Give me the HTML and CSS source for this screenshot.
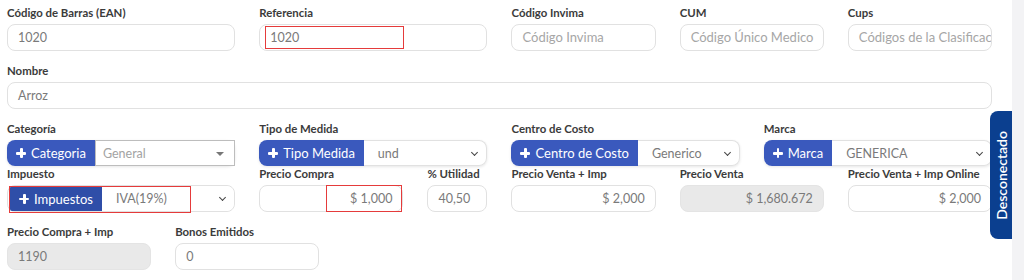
FILE: index.html
```html
<!DOCTYPE html>
<html lang="es">
<head>
<meta charset="utf-8">
<title>Producto</title>
<link rel="stylesheet" href="styles.css">
</head>
<body>
<div class="page">
  <main class="form">
    <div class="grid">
      <div class="field s3">
        <label class="lbl">Código de Barras (EAN)</label>
        <div class="input">1020</div>
      </div>
      <div class="field s3">
        <label class="lbl">Referencia</label>
        <div class="input marked-ref">1020<span class="mark mark-ref"></span></div>
      </div>
      <div class="field s2">
        <label class="lbl">Código Invima</label>
        <div class="input ph">Código Invima</div>
      </div>
      <div class="field s2">
        <label class="lbl">CUM</label>
        <div class="input ph">Código Único Medico</div>
      </div>
      <div class="field s2">
        <label class="lbl">Cups</label>
        <div class="input ph clip">Códigos de la Clasificac</div>
      </div>

      <div class="field s12">
        <label class="lbl">Nombre</label>
        <div class="input">Arroz</div>
      </div>

      <div class="field s3 tight">
        <label class="lbl">Categoría</label>
        <div class="igroup shadow">
          <span class="btn"><span class="plus"></span>Categoria</span>
          <span class="sel sel-box">General<span class="tri"></span></span>
        </div>
      </div>
      <div class="field s3 tight">
        <label class="lbl">Tipo de Medida</label>
        <div class="igroup shadow">
          <span class="btn"><span class="plus"></span>Tipo Medida</span>
          <span class="sel">und<span class="chev"></span></span>
        </div>
      </div>
      <div class="field s3 tight">
        <label class="lbl">Centro de Costo</label>
        <div class="igroup shadow">
          <span class="btn"><span class="plus"></span>Centro de Costo</span>
          <span class="sel">Generico<span class="chev"></span></span>
        </div>
      </div>
      <div class="field s3 tight">
        <label class="lbl">Marca</label>
        <div class="igroup shadow">
          <span class="btn"><span class="plus"></span>Marca</span>
          <span class="sel">GENERICA<span class="chev"></span></span>
        </div>
      </div>

      <div class="field s3">
        <label class="lbl">Impuesto</label>
        <div class="igroup tax">
          <span class="btn dark"><span class="plus"></span>Impuestos</span>
          <span class="sel">IVA(19%)<span class="chev"></span></span>
          <span class="mark mark-tax"></span>
        </div>
      </div>
      <div class="field s2">
        <label class="lbl">Precio Compra</label>
        <div class="input num">$ 1,000<span class="mark mark-price"></span></div>
      </div>
      <div class="field s1">
        <label class="lbl">% Utilidad</label>
        <div class="input">40,50</div>
      </div>
      <div class="field s2">
        <label class="lbl">Precio Venta + Imp</label>
        <div class="input num">$ 2,000</div>
      </div>
      <div class="field s2">
        <label class="lbl">Precio Venta</label>
        <div class="input num disabled">$ 1,680.672</div>
      </div>
      <div class="field s2">
        <label class="lbl">Precio Venta + Imp Online</label>
        <div class="input num">$ 2,000</div>
      </div>

      <div class="field s2">
        <label class="lbl">Precio Compra + Imp</label>
        <div class="input disabled">1190</div>
      </div>
      <div class="field s2">
        <label class="lbl">Bonos Emitidos</label>
        <div class="input">0</div>
      </div>
    </div>
  </main>
  <aside class="side"></aside>
  <div class="status-tab"><span class="status-text">Desconectado</span></div>
</div>
</body>
</html>
```

FILE: styles.css
```css
* { box-sizing: border-box; }
html, body { margin: 0; padding: 0; background: #fff; }
body {
  font-family: "Lato", "Noto Sans", sans-serif;
  color: #3a3a3a;
  width: 1024px;
  height: 280px;
  overflow: hidden;
}
.page {
  position: relative;
  display: flex;
  width: 1024px;
  height: 280px;
}
.form {
  flex: 1;
  padding: 4px 0 0 7px;
}
.side {
  width: 12px;
  background: #f3f3f5;
}
.grid {
  width: 985px;
  display: grid;
  grid-template-columns: repeat(12, 1fr);
  column-gap: 24px;
  row-gap: 11px;
}
.s1 { grid-column: span 1; }
.s2 { grid-column: span 2; }
.s3 { grid-column: span 3; }
.s12 { grid-column: span 12; }
.field.tight { margin-bottom: -12px; }
.lbl {
  display: block;
  height: 18px;
  line-height: 18px;
  margin-bottom: 2px;
  font-size: 11.4px;
  font-weight: 700;
  color: #3b3b3b;
  white-space: nowrap;
}
.input {
  position: relative;
  height: 27px;
  line-height: 25px;
  border: 1px solid #e1e1e1;
  border-radius: 8px;
  padding: 0 10px;
  font-size: 12.5px;
  color: #7a7a7a;
  background: #fff;
  white-space: nowrap;
}
.input.ph { color: #a6a6a6; font-size: 13px; }
.input.clip { overflow: hidden; }
.input.num { text-align: right; }
.input.disabled { background: #e9e9e9; border-color: #e4e4e4; }

.igroup {
  position: relative;
  display: flex;
  height: 26px;
  border-radius: 8px;
}
.igroup.shadow { box-shadow: 0 1px 3px rgba(0,0,0,0.10); }
.btn {
  display: flex;
  align-items: center;
  gap: 5px;
  padding: 0 9px;
  background: #3a59bd;
  color: #fff;
  font-size: 13px;
  border-radius: 8px 0 0 8px;
  white-space: nowrap;
  flex: none;
}
.btn.dark { background: #2f4ea8; }
.plus {
  position: relative;
  width: 10px;
  height: 10px;
  flex: none;
}
.plus::before, .plus::after {
  content: "";
  position: absolute;
  background: #fff;
  border-radius: 1px;
}
.plus::before { left: 0; top: 4px; width: 10px; height: 2.5px; }
.plus::after { left: 4px; top: 0; width: 2.5px; height: 10px; }
.sel {
  position: relative;
  flex: 1;
  display: flex;
  align-items: center;
  padding: 0 14px;
  font-size: 12.5px;
  color: #7a7a7a;
  border: 1px solid #e1e1e1;
  border-left: none;
  border-radius: 0 8px 8px 0;
  background: #fff;
  white-space: nowrap;
}
.sel-box {
  border: 1px solid #bdbdbd;
  border-radius: 0;
  padding-left: 7px;
  color: #a3a3a3;
}
.tri {
  position: absolute;
  right: 10px;
  top: 11px;
  border-left: 4px solid transparent;
  border-right: 4px solid transparent;
  border-top: 4px solid #777;
}
.chev {
  position: absolute;
  right: 9px;
  top: 9px;
  width: 5px;
  height: 5px;
  border-right: 1.8px solid #444;
  border-bottom: 1.8px solid #444;
  transform: rotate(45deg);
}
.igroup.tax { height: 27px; border: 1px solid #e1e1e1; }
.igroup.tax .btn { margin: 0 0 0 2px; border-radius: 2px 0 0 2px; }
.igroup.tax .sel { border: none; }

.mark {
  position: absolute;
  border: 1px solid #e53b3b;
  pointer-events: none;
}
.mark-ref { left: 5px; top: 1px; width: 139px; height: 23px; }
.mark-price { left: 66px; top: -1px; width: 76px; height: 27px; }
.mark-tax { left: 1px; top: 0; width: 182px; height: 27px; }

.status-tab {
  position: absolute;
  left: 990px;
  top: 111px;
  width: 22px;
  height: 128px;
  background: #0b3f8f;
  border-radius: 8px 0 0 8px;
  display: flex;
  align-items: center;
  justify-content: center;
}
.status-text {
  writing-mode: vertical-rl;
  transform: rotate(180deg);
  color: #fff;
  font-size: 14px;
  font-weight: 600;
  white-space: nowrap;
}
```
